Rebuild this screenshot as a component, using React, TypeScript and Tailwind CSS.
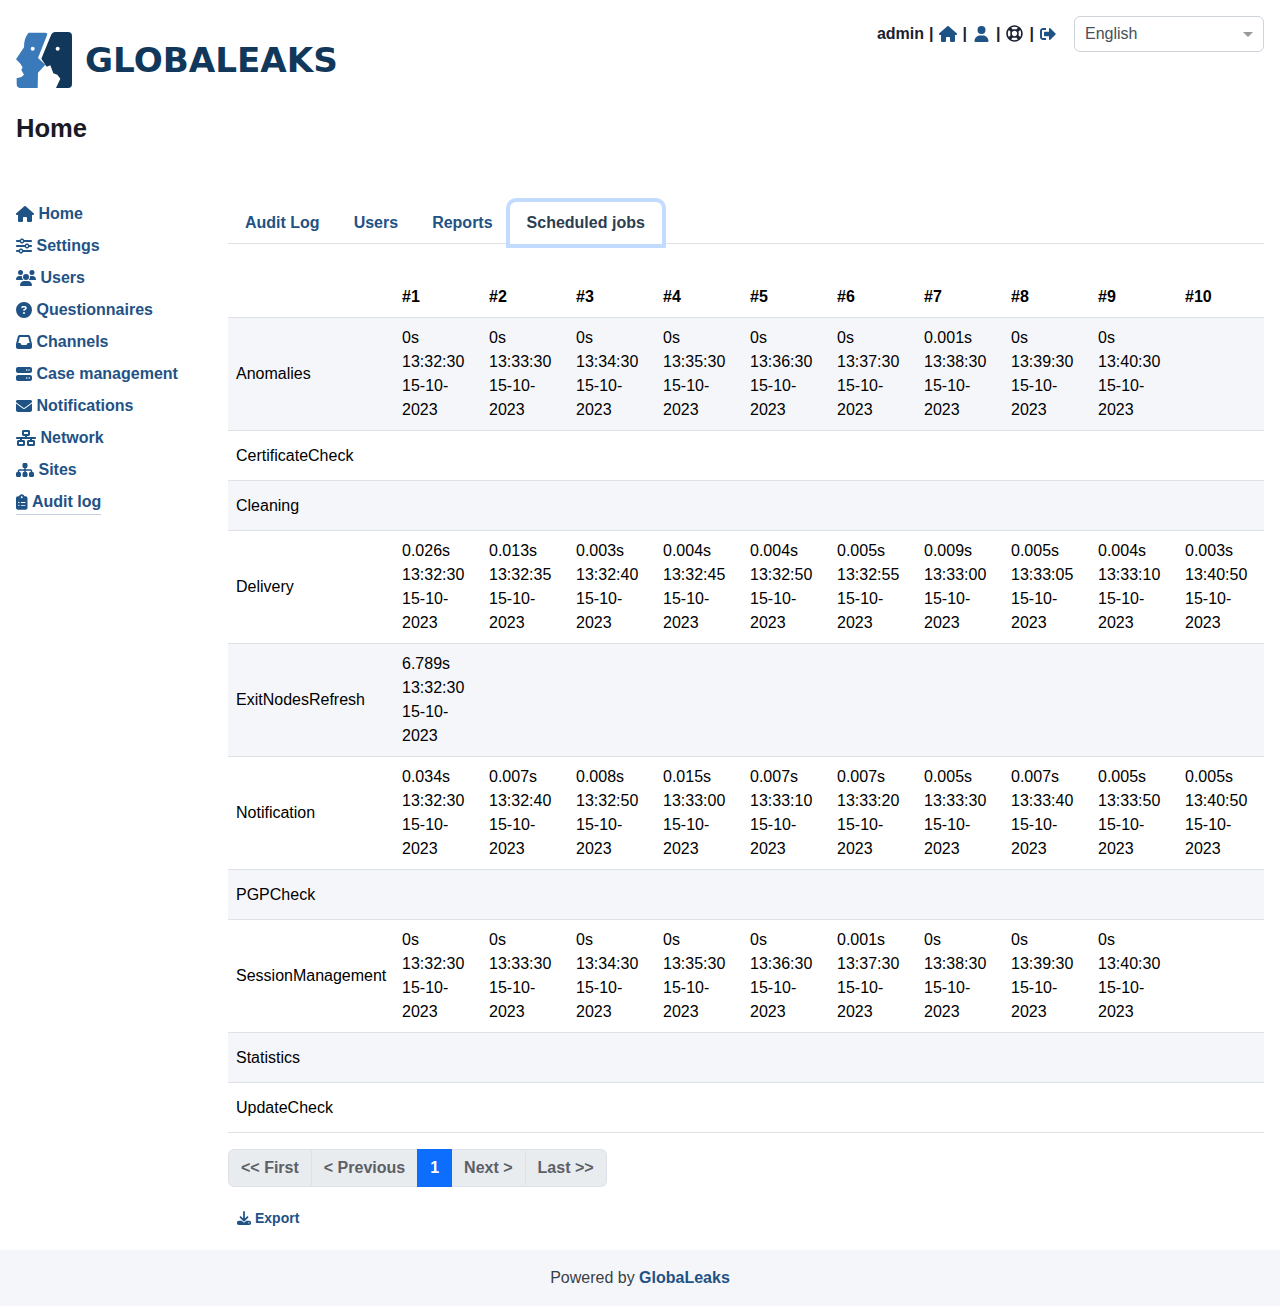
import React from 'react'
import {
  FaHouse, FaSliders, FaUsers, FaCircleQuestion, FaInbox, FaServer, FaEnvelope,
  FaNetworkWired, FaSitemap, FaClipboardList, FaUser, FaDownload,
} from 'react-icons/fa6'
import { FaRegLifeRing, FaSignOutAlt } from 'react-icons/fa'

const navItems = [
  { label: 'Home', icon: FaHouse, size: 'w-[18px] h-4 shrink-0' },
  { label: 'Settings', icon: FaSliders, size: 'w-4 h-4 shrink-0' },
  { label: 'Users', icon: FaUsers, size: 'w-5 h-4 shrink-0' },
  { label: 'Questionnaires', icon: FaCircleQuestion, size: 'w-4 h-4 shrink-0' },
  { label: 'Channels', icon: FaInbox, size: 'w-4 h-4 shrink-0' },
  { label: 'Case management', icon: FaServer, size: 'w-4 h-4 shrink-0' },
  { label: 'Notifications', icon: FaEnvelope, size: 'w-4 h-4 shrink-0' },
  { label: 'Network', icon: FaNetworkWired, size: 'w-5 h-4 shrink-0' },
  { label: 'Sites', icon: FaSitemap, size: 'w-[18px] h-4 shrink-0' },
  { label: 'Audit log', icon: FaClipboardList, size: 'w-[11.5px] h-4 shrink-0' },
]

type Run = [string, string]

const rows: { name: string; cells: Run[] }[] = [
  {
    name: 'Anomalies',
    cells: [['0s', '13:32:30'], ['0s', '13:33:30'], ['0s', '13:34:30'], ['0s', '13:35:30'], ['0s', '13:36:30'], ['0s', '13:37:30'], ['0.001s', '13:38:30'], ['0s', '13:39:30'], ['0s', '13:40:30']],
  },
  { name: 'CertificateCheck', cells: [] },
  { name: 'Cleaning', cells: [] },
  {
    name: 'Delivery',
    cells: [['0.026s', '13:32:30'], ['0.013s', '13:32:35'], ['0.003s', '13:32:40'], ['0.004s', '13:32:45'], ['0.004s', '13:32:50'], ['0.005s', '13:32:55'], ['0.009s', '13:33:00'], ['0.005s', '13:33:05'], ['0.004s', '13:33:10'], ['0.003s', '13:40:50']],
  },
  { name: 'ExitNodesRefresh', cells: [['6.789s', '13:32:30']] },
  {
    name: 'Notification',
    cells: [['0.034s', '13:32:30'], ['0.007s', '13:32:40'], ['0.008s', '13:32:50'], ['0.015s', '13:33:00'], ['0.007s', '13:33:10'], ['0.007s', '13:33:20'], ['0.005s', '13:33:30'], ['0.007s', '13:33:40'], ['0.005s', '13:33:50'], ['0.005s', '13:40:50']],
  },
  { name: 'PGPCheck', cells: [] },
  {
    name: 'SessionManagement',
    cells: [['0s', '13:32:30'], ['0s', '13:33:30'], ['0s', '13:34:30'], ['0s', '13:35:30'], ['0s', '13:36:30'], ['0.001s', '13:37:30'], ['0s', '13:38:30'], ['0s', '13:39:30'], ['0s', '13:40:30']],
  },
  { name: 'Statistics', cells: [] },
  { name: 'UpdateCheck', cells: [] },
]

const columns = [1, 2, 3, 4, 5, 6, 7, 8, 9, 10]

const Logo = () => (
  <div className='flex items-center h-14'>
    <svg width='56' height='56' viewBox='0 0 168 168' className='shrink-0'>
      <path
        d='M38 2 L88 2 Q96 2 93 10 L66 78 L88 98 L66 122 L65 168 L14 168 Q2 168 2 156 L2 138 Q14 140 24 128 L16 114 L20 106 L12 94 L0 82 L24 46 Q24 16 38 2 Z'
        fill='#3a7aba'
      />
      <path
        d='M118 0 L156 0 Q168 0 168 12 L168 156 Q168 168 156 168 L120 168 L133 140 L124 128 L112 124 L103 100 L92 104 L76 80 L104 12 Q108 0 118 0 Z'
        fill='#11375b'
      />
      <circle cx='50' cy='50' r='6' fill='#fff' />
      <circle cx='125' cy='50' r='6' fill='#fff' />
    </svg>
    <span className='ml-[13px] font-["DejaVu_Sans",sans-serif] text-[34.2px] font-bold text-[#11375b] leading-none'>
      GLOBALEAKS
    </span>
  </div>
)

const App = () => {
  return (
    <div className='font-["Liberation_Sans",Arial,sans-serif] text-base leading-6 text-[#212529] bg-white min-h-[1306px] flex flex-col'>
      <header className='flex justify-between items-start px-4 pt-4'>
        <div className='pt-4'>
          <Logo />
          <h1 className='mt-[23px] text-[25.6px] leading-[34px] font-bold text-[#1a1a24]'>Home</h1>
        </div>
        <div className='flex items-start'>
          <div className='flex items-center h-[35px] font-bold text-[#1a2230]'>
            <span>admin</span>
            <span className='ml-[5px]'>|</span>
            <FaHouse className='ml-[5px] text-[#1f5285] w-[18px] h-4' />
            <span className='ml-[6px]'>|</span>
            <FaUser className='ml-[7px] text-[#1f5285] w-[15px] h-4' />
            <span className='ml-[7px]'>|</span>
            <FaRegLifeRing className='ml-[5px] text-[#1a2230] w-[17px] h-[17px]' />
            <span className='ml-[7px]'>|</span>
            <FaSignOutAlt className='ml-[6px] text-[#1f5285] w-4 h-4' />
          </div>
          <div className='ml-[18px] w-[190px] h-9 border border-[#ced4da] rounded-md pl-[10px] pr-[10px] flex items-center justify-between text-[#495057]'>
            <span>English</span>
            <span className='w-0 h-0 border-x-[5px] border-x-transparent border-t-[5px] border-t-[#999]' />
          </div>
        </div>
      </header>

      <div className='flex px-4 mt-[52px] flex-1'>
        <nav className='w-[212px] shrink-0 flex flex-col items-start pt-px'>
          {navItems.map((item) => {
            const Icon = item.icon
            const last = item.label === 'Audit log'
            return (
              <a
                key={item.label}
                className={last
                  ? 'flex items-center gap-[4.5px] h-[26px] my-[3px] font-bold text-[#1f5285] border-b border-[#c5d0e0]'
                  : 'flex items-center gap-[4.5px] h-[26px] my-[3px] font-bold text-[#1f5285]'}
              >
                <Icon className={item.size} />
                <span>{item.label}</span>
              </a>
            )
          })}
        </nav>

        <main className='flex-1 min-w-0 pt-[5px]'>
          <div className='flex border-b border-[#dee2e6] h-[42px]'>
            <a className='px-[17px] py-[9px] font-bold text-[#1f5285]'>Audit Log</a>
            <a className='px-[17px] py-[9px] font-bold text-[#1f5285]'>Users</a>
            <a className='px-[17px] py-[9px] font-bold text-[#1f5285]'>Reports</a>
            <a className='px-[17px] py-[9px] h-[42px] font-bold text-[#2c3e50] bg-white rounded-t-md shadow-[0_0_0_4px_#c2dbfe] relative'>Scheduled jobs</a>
          </div>

          <table className='mt-[33px] w-full table-fixed border-collapse'>
            <thead>
              <tr className='border-b border-[#dee2e6]'>
                <th className='w-[166px]' />
                {columns.map((n) => (
                  <th key={n} className='w-[87px] p-2 text-left font-bold text-black'>#{n}</th>
                ))}
              </tr>
            </thead>
            <tbody>
              {rows.map((row, i) => (
                <tr key={row.name} className={i % 2 === 0 ? 'bg-[#f5f6fa] border-b border-[#dee2e6] h-[50px]' : 'border-b border-[#dee2e6] h-[50px]'}>
                  <td className='px-2 text-black whitespace-nowrap'>{row.name}</td>
                  {columns.map((n, c) => {
                    const cell = row.cells[c]
                    return (
                      <td key={n} className='p-2 pr-0 text-black align-top'>
                        {cell && (
                          <>
                            <div>{cell[0]}</div>
                            <div>{cell[1]}</div>
                            <div>15-10-</div>
                            <div>2023</div>
                          </>
                        )}
                      </td>
                    )
                  })}
                </tr>
              ))}
            </tbody>
          </table>

          <div className='mt-4 inline-flex h-[38px] rounded-md bg-[#e9ecef] overflow-hidden font-bold text-[#5c6066] align-top'>
            <span className='px-3 flex items-center border border-[#dee2e6] rounded-l-md'>&lt;&lt; First</span>
            <span className='px-3 flex items-center border-y border-[#dee2e6]'>&lt; Previous</span>
            <span className='px-[13px] flex items-center bg-[#0d6efd] text-white'>1</span>
            <span className='px-3 flex items-center border-y border-r border-[#dee2e6]'>Next &gt;</span>
            <span className='px-3 flex items-center border-y border-r border-[#dee2e6] rounded-r-md'>Last &gt;&gt;</span>
          </div>

          <div className='mt-[21px] pl-[9px] flex items-center gap-1 text-sm font-bold text-[#1f5285] h-[20px]'>
            <FaDownload className='w-[14px] h-[14px]' />
            <span>Export</span>
          </div>
        </main>
      </div>

      <footer className='mt-auto h-14 bg-[#f5f6fa] flex items-center justify-center text-[#3a3f45]'>
        <span>Powered by <b className='text-[#1f5285]'>GlobaLeaks</b></span>
      </footer>
    </div>
  )
}

export default App
